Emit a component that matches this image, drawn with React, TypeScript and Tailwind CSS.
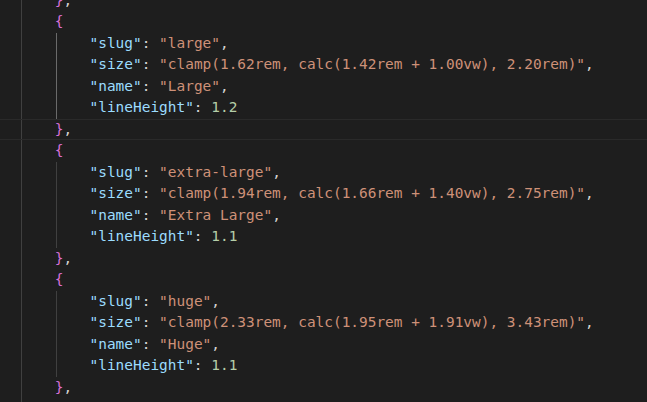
const blocks = [
  {
    slug: 'large',
    size: 'clamp(1.62rem, calc(1.42rem + 1.00vw), 2.20rem)',
    name: 'Large',
    lineHeight: '1.2',
    active: true,
  },
  {
    slug: 'extra-large',
    size: 'clamp(1.94rem, calc(1.66rem + 1.40vw), 2.75rem)',
    name: 'Extra Large',
    lineHeight: '1.1',
    active: false,
  },
  {
    slug: 'huge',
    size: 'clamp(2.33rem, calc(1.95rem + 1.91vw), 3.43rem)',
    name: 'Huge',
    lineHeight: '1.1',
    active: false,
  },
];

const Line = ({ children, current }: { children: React.ReactNode; current?: boolean }) => (
  <div
    className={
      current
        ? 'h-[21.5px] leading-[19.5px] whitespace-pre border-y border-[#2a2a2a] box-border -ml-[20px] pl-[20px]'
        : 'h-[21.5px] leading-[21.5px] whitespace-pre'
    }
  >
    {children}
  </div>
);

const Pair = ({ k, children, last }: { k: string; children: React.ReactNode; last?: boolean }) => (
  <Line>
    <span className="text-[#9cdcfe]">"{k}"</span>
    <span className="text-[#d4d4d4]">: </span>
    {children}
    {!last && <span className="text-[#d4d4d4]">,</span>}
  </Line>
);

const Str = ({ v }: { v: string }) => <span className="text-[#ce9178]">"{v}"</span>;

export default function App() {
  return (
    <div className="w-[647px] h-[402px] overflow-hidden bg-[#1e1e1e] pl-[21px] font-['DejaVu_Sans_Mono',Menlo,monospace] text-[14.45px] text-[#d4d4d4]">
      <div className="flex flex-col min-h-[402px] border-l border-[#404040]">
        <div className="mt-[-10.25px] -ml-[2px]">
          <Line>
            {'    '}
            <span className="text-[#da70d6]">{'}'}</span>
            <span>,</span>
          </Line>
          {blocks.map((b, i) => (
            <div key={b.slug}>
              <Line>
                {'    '}
                <span className="text-[#da70d6]">{'{'}</span>
              </Line>
              <div
                className={
                  b.active
                    ? 'ml-[calc(4ch+1px)] border-l border-[#6a6a6a] pl-[calc(4ch-2px)]'
                    : 'ml-[calc(4ch+1px)] border-l border-[#404040] pl-[calc(4ch-2px)]'
                }
              >
                <Pair k="slug">
                  <Str v={b.slug} />
                </Pair>
                <Pair k="size">
                  <Str v={b.size} />
                </Pair>
                <Pair k="name">
                  <Str v={b.name} />
                </Pair>
                <Pair k="lineHeight" last>
                  <span className="text-[#b5cea8]">{b.lineHeight}</span>
                </Pair>
              </div>
              <Line current={i === 0}>
                {'    '}
                <span className="text-[#da70d6]">{'}'}</span>
                <span>,</span>
              </Line>
            </div>
          ))}
        </div>
      </div>
    </div>
  );
}
